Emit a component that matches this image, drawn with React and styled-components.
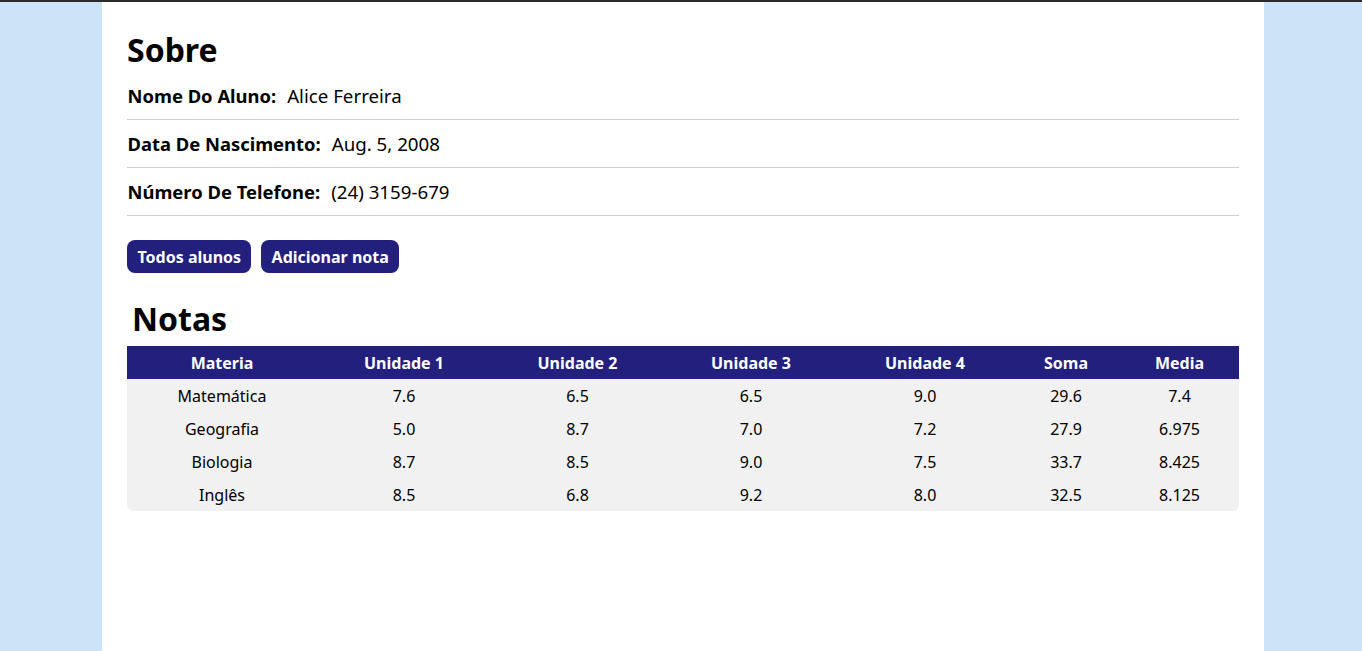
import React from "react";
import styled, { createGlobalStyle } from "styled-components";

const GlobalStyle = createGlobalStyle`
  html, body {
    margin: 0;
    padding: 0;
  }
  body {
    background: #cce3f8;
    border-top: 2px solid #2a2a2a;
    font-family: "Noto Sans", "Open Sans", sans-serif;
    color: #000;
  }
`;

const Page = styled.div`
  display: flex;
  padding: 0 98px 0 102px;
  min-height: calc(100vh - 2px);
`;

const Sheet = styled.main`
  flex: 1;
  background: #fff;
  padding: 26px 25px 40px 25px;
`;

const Title = styled.h1`
  margin: 0 0 1px 0;
  font-size: 32px;
  font-weight: 700;
  line-height: normal;
  padding-left: ${(p) => (p.$indent ? "5px" : "0")};
`;

const InfoRow = styled.div`
  display: flex;
  align-items: center;
  height: 47px;
  border-bottom: 1px solid #cfcfcf;
  font-size: 18.72px;
  padding-left: 0.5px;

  strong {
    font-size: 18.4px;
    font-weight: 700;
    margin-right: 11px;
  }
`;

const Actions = styled.div`
  display: flex;
  gap: 10px;
  margin: 24px 0 24px 0;
`;

const Button = styled.button`
  font-family: inherit;
  font-size: 16px;
  font-weight: 700;
  line-height: 22px;
  color: #fff;
  background: #221f7d;
  border: none;
  border-radius: 8px;
  padding: 6px 10px 5px 10.5px;
  cursor: pointer;
`;

const TableWrap = styled.div`
  margin-top: 6px;
  border-radius: 0 0 6px 6px;
  overflow: hidden;
`;

const Table = styled.table`
  width: 100%;
  border-collapse: collapse;
  table-layout: fixed;
  font-size: 16px;
`;

const Th = styled.th`
  width: ${(p) => p.$w}px;
  height: 33px;
  padding: 0;
  background: #221f7d;
  color: #fff;
  font-weight: 700;
  text-align: center;
`;

const Td = styled.td`
  height: 33px;
  padding: 0;
  background: #f1f1f1;
  text-align: center;
`;

const columns = [
  ["Materia", 190],
  ["Unidade 1", 174],
  ["Unidade 2", 173],
  ["Unidade 3", 174],
  ["Unidade 4", 174],
  ["Soma", 108],
  ["Media", 119],
];

const notas = [
  ["Matemática", "7.6", "6.5", "6.5", "9.0", "29.6", "7.4"],
  ["Geografia", "5.0", "8.7", "7.0", "7.2", "27.9", "6.975"],
  ["Biologia", "8.7", "8.5", "9.0", "7.5", "33.7", "8.425"],
  ["Inglês", "8.5", "6.8", "9.2", "8.0", "32.5", "8.125"],
];

const info = [
  ["Nome Do Aluno:", "Alice Ferreira"],
  ["Data De Nascimento:", "Aug. 5, 2008"],
  ["Número De Telefone:", "(24) 3159-679"],
];

export default function App() {
  return (
    <>
      <GlobalStyle />
      <Page>
        <Sheet>
          <Title>Sobre</Title>
          {info.map(([label, value]) => (
            <InfoRow key={label}>
              <strong>{label}</strong>
              <span>{value}</span>
            </InfoRow>
          ))}

          <Actions>
            <Button>Todos alunos</Button>
            <Button>Adicionar nota</Button>
          </Actions>

          <Title $indent>Notas</Title>
          <TableWrap>
            <Table>
              <thead>
                <tr>
                  {columns.map(([name, w]) => (
                    <Th key={name} $w={w}>
                      {name}
                    </Th>
                  ))}
                </tr>
              </thead>
              <tbody>
                {notas.map((row) => (
                  <tr key={row[0]}>
                    {row.map((cell, i) => (
                      <Td key={i}>{cell}</Td>
                    ))}
                  </tr>
                ))}
              </tbody>
            </Table>
          </TableWrap>
        </Sheet>
      </Page>
    </>
  );
}
